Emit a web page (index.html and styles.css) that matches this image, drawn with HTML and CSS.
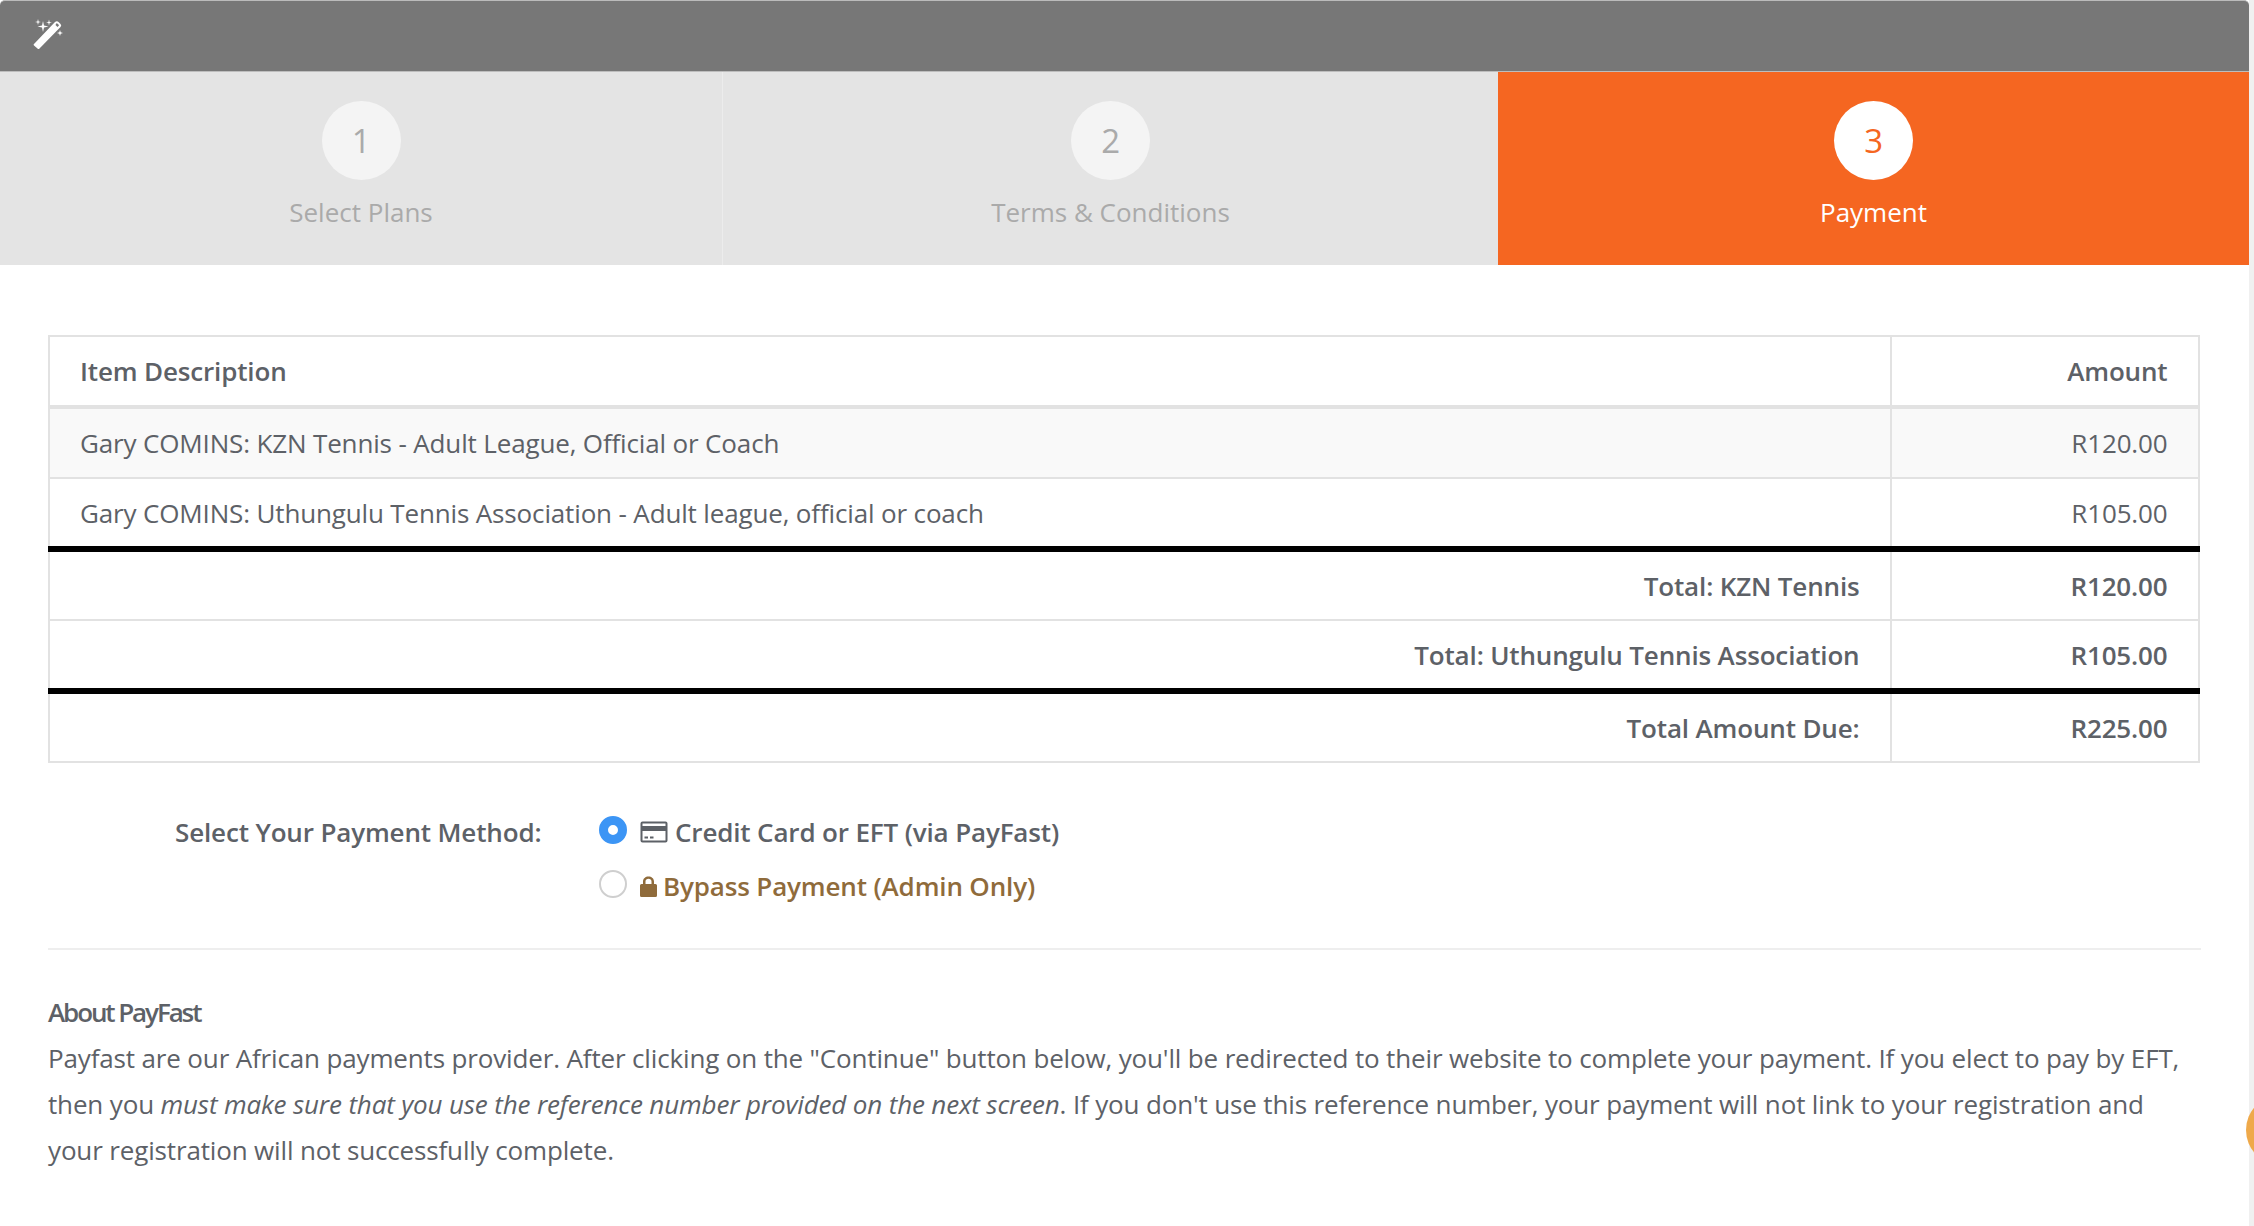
FILE: index.html
```html
<!DOCTYPE html>
<html lang="en">
<head>
<meta charset="utf-8">
<title>Payment</title>
<link rel="stylesheet" href="styles.css">
</head>
<body>
<div class="page">
  <main class="panel">
    <header class="topbar">
      <svg class="wand" width="40" height="40" viewBox="0 0 40 40" aria-hidden="true">
        <path class="wand-body" fill-rule="evenodd" d="M5 29 L26 7 Q28 5.500 29.500 7 L31.500 9 Q33 10.500 31.500 12 L10.500 33.500 Q9.500 34.500 8.500 33.500 L5 30.500 Q4 29.800 5 29 Z M26.500 10 L28.500 12 L29.700 10.800 Q30.200 10.300 29.700 9.800 L28.300 8.400 Q27.800 7.900 27.300 8.400 Z"/>
        <path class="wand-body" d="M14 6 L15 10.500 L19.500 11.500 L15 12.500 L14 17 L13 12.500 L8.500 11.500 L13 10.500 Z"/>
        <path class="wand-body" d="M9 4 L9.600 6.400 L12 7 L9.600 7.600 L9 10 L8.400 7.600 L6 7 L8.400 6.400 Z"/>
        <path class="wand-body" d="M20 4.500 L20.600 6.900 L23 7.500 L20.600 8.100 L20 10.500 L19.400 8.100 L17 7.500 L19.400 6.900 Z"/>
        <path class="wand-body" d="M31 15 L31.700 17.300 L34 18 L31.700 18.700 L31 21 L30.300 18.700 L28 18 L30.300 17.300 Z"/>
      </svg>
    </header>
    <nav class="steps">
      <div class="step step-one"><span class="step-num">1</span><span class="step-label">Select Plans</span></div>
      <div class="step step-two"><span class="step-num">2</span><span class="step-label">Terms &amp; Conditions</span></div>
      <div class="step step-three"><span class="step-num">3</span><span class="step-label">Payment</span></div>
    </nav>
    <section class="content">
      <table class="invoice">
        <thead>
          <tr class="row-head"><th class="desc left">Item Description</th><th class="amt">Amount</th></tr>
        </thead>
        <tbody>
          <tr class="row-item row-odd"><td class="desc left">Gary COMINS: KZN Tennis - Adult League, Official or Coach</td><td class="amt">R120.00</td></tr>
          <tr class="row-item row-last"><td class="desc left">Gary COMINS: Uthungulu Tennis Association - Adult league, official or coach</td><td class="amt">R105.00</td></tr>
          <tr class="row-total"><th class="desc">Total: KZN Tennis</th><th class="amt">R120.00</th></tr>
          <tr class="row-total row-last"><th class="desc">Total: Uthungulu Tennis Association</th><th class="amt">R105.00</th></tr>
          <tr class="row-total row-due"><th class="desc">Total Amount Due:</th><th class="amt">R225.00</th></tr>
        </tbody>
      </table>
      <div class="method">
        <div class="method-label">Select Your Payment Method:</div>
        <div class="method-options">
          <label class="option">
            <span class="radio radio-on"></span>
            <svg class="card-icon" width="28" height="22" viewBox="0 0 28 22" aria-hidden="true">
              <path fill-rule="evenodd" d="M2.500 0.500 H25.500 Q27.500 0.500 27.500 2.500 V19.500 Q27.500 21.500 25.500 21.500 H2.500 Q0.500 21.500 0.500 19.500 V2.500 Q0.500 0.500 2.500 0.500 Z M2.500 2.500 V5 H25.500 V2.500 Z M2.500 10 V19.500 H25.500 V10 Z M4.500 15.500 H8 V17.500 H4.500 Z M10 15.500 H13.500 V17.500 H10 Z"/>
            </svg>
            <span>Credit Card or EFT (via PayFast)</span>
          </label>
          <label class="option option-admin">
            <span class="radio"></span>
            <svg class="lock-icon" width="17" height="21" viewBox="0 0 17 21" aria-hidden="true">
              <path fill-rule="evenodd" d="M3 8 V5.500 C3 2.500 5.500 0.500 8.500 0.500 C11.500 0.500 14 2.500 14 5.500 V8 H15.500 Q17 8 17 9.500 V19.500 Q17 21 15.500 21 H1.500 Q0 21 0 19.500 V9.500 Q0 8 1.500 8 Z M5.500 8 H11.500 V5.500 C11.500 3.800 10.200 2.800 8.500 2.800 C6.800 2.800 5.500 3.800 5.500 5.500 Z"/>
            </svg>
            <span>Bypass Payment (Admin Only)</span>
          </label>
        </div>
      </div>
      <hr class="rule">
      <h2 class="about-title">About PayFast</h2>
      <p class="about-text">Payfast are our African payments provider. After clicking on the "Continue" button below, you'll be redirected to their website to complete your payment. If you elect to pay by EFT, then you <em>must make sure that you use the reference number provided on the next screen</em>. If you don't use this reference number, your payment will not link to your registration and your registration will not successfully complete.</p>
    </section>
  </main>
  <div class="side-strip"></div>
  <div class="help-bubble"></div>
</div>
</body>
</html>
```
FILE: styles.css
```css
* { box-sizing: border-box; }
html, body { margin: 0; padding: 0; height: 100%; background: #fff; overflow: hidden; }
body { font-family: "Open Sans", "Liberation Sans", sans-serif; font-size: 26px; letter-spacing: -0.15px; color: #5d6167; }
.page { position: relative; display: flex; height: 1226px; width: 2254px; overflow: hidden; }
.panel { width: 2249px; flex: none; background: #fff; }
.side-strip { flex: 1; background: #f0f0f0; }
.topbar { height: 72px; background: #777; border-top: 1px solid #bbb; border-bottom: 1px solid #bdbdbd; border-radius: 5px 5px 0 0; padding: 14px 0 0 29px; }
.wand { display: block; }
.wand-body { fill: #fff; }
.steps { display: flex; height: 193px; }
.step { display: flex; flex-direction: column; align-items: center; background: #e4e4e4; color: #aaa; padding-top: 29px; }
.step-one { width: 722px; }
.step-two { width: 776px; border-left: 1px solid #ececec; }
.step-three { width: 751px; background: #f56621; color: #fff; }
.step-num { width: 79px; height: 79px; border-radius: 50%; background: #f4f4f4; display: flex; align-items: center; justify-content: center; font-size: 33px; color: #aaa; }
.step-three .step-num { background: #fff; color: #f56621; }
.step-label { font-size: 26px; letter-spacing: 0; line-height: 34px; margin-top: 15px; }
.step-three .step-label { color: #fff; }
.content { padding: 70px 48px 0 48px; }
.invoice { width: 2152px; border-collapse: collapse; table-layout: fixed; }
.invoice th, .invoice td { padding: 0 30.500px 0 30px; border: 2.500px solid #e2e2e2; text-align: right; height: 71px; font-size: 26px; font-weight: 400; }
.invoice th { font-weight: 600; }
.invoice .left { text-align: left; }
.invoice .amt { width: 308px; }
.row-head th { border-bottom-width: 4px; }
.row-odd td { background: #f9f9f9; }
.invoice .row-last th, .invoice .row-last td { border-bottom: 6px solid #000; }
.method { display: flex; padding: 42px 0 0 127px; }
.method-label { width: 424px; font-weight: 600; line-height: 54px; }
.method-options { display: flex; flex-direction: column; }
.option { display: flex; align-items: center; height: 54px; font-weight: 600; }
.option-admin { color: #8f6b3b; }
.radio { width: 28px; height: 28px; border-radius: 50%; border: 2px solid #cfcfcf; background: #fff; margin-right: 13px; margin-top: -4px; flex: none; }
.radio-on { border: 9px solid #3c95f5; }
.card-icon { fill: #5d6167; margin-right: 7px; }
.lock-icon { fill: #8f6b3b; margin-right: 6px; }
.rule { border: 0; border-top: 2px solid #eee; margin: 35px 0 0; }
.about-title { font-size: 26px; font-weight: 600; letter-spacing: -2.100px; line-height: 46px; margin: 39px 0 0; }
.about-text { margin: 0; line-height: 46px; }
.help-bubble { position: absolute; left: 2246px; top: 1095px; width: 70px; height: 70px; border-radius: 50%; background: #efa94a; }
```
